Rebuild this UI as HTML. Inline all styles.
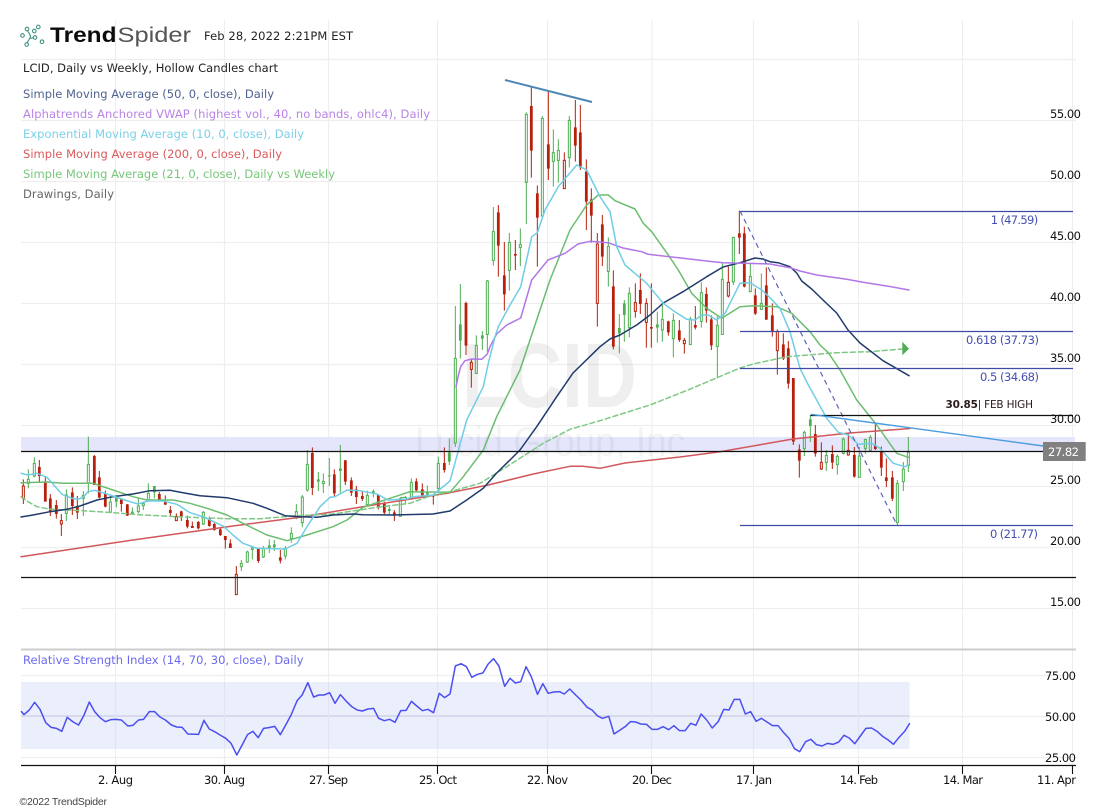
<!DOCTYPE html>
<html><head><meta charset="utf-8"><title>LCID chart</title>
<style>
html,body{margin:0;padding:0;background:#fff;width:1106px;height:811px;overflow:hidden}
svg{display:block}
svg *{vector-effect:non-scaling-stroke}
text{font-family:"DejaVu Sans","Liberation Sans",sans-serif;font-size:11.5px}
.l{fill:none;stroke-linejoin:round;stroke-linecap:round;stroke-width:1.5}
.gl{fill:none;stroke:#4fae53;stroke-width:1}
.gb{fill:none;stroke:#4fae53;stroke-width:2.8}
.rl{fill:none;stroke:#b6200c;stroke-width:1}
.rb{fill:none;stroke:#b6200c;stroke-width:2.8}
.ax{fill:#111}
</style></head><body>
<svg width="1106" height="811" viewBox="0 0 1106 811" xmlns="http://www.w3.org/2000/svg">
<rect width="1106" height="811" fill="#fff"/>
<!-- grid -->
<path d="M115.5 20V649M224.5 20V649M328.5 20V649M437.5 20V649M547.5 20V649M652 20V649M753.5 20V649M858.5 20V649M962.5 20V649M1072.5 20V649" stroke="#eeeeee" stroke-width="1.2" fill="none"/>
<path d="M21 59.5H1076M21 120.5H1076M21 181.5H1076M21 242.5H1076M21 303.5H1076M21 364.5H1076M21 425.5H1076M21 486.5H1076M21 547.5H1076M21 608.5H1076" stroke="#eeeeee" stroke-width="1.2" fill="none"/>
<path d="M115.5 650V766M224.5 650V766M328.5 650V766M437.5 650V766M547.5 650V766M651.5 650V766M753.5 650V766M858.5 650V766M962.5 650V766M1072.5 650V766M21 675.5H1076M21 716.5H1076M21 757.5H1076" stroke="#eeeeee" stroke-width="1.2" fill="none"/>
<!-- band -->
<rect x="21" y="437" width="1054" height="14.5" fill="#e5e5fb"/>
<!-- watermark -->
<text x="462" y="407" textLength="175" lengthAdjust="spacingAndGlyphs" style="font-family:'Liberation Sans',sans-serif;font-size:92px;font-weight:bold" fill="#000" opacity=".06">LCID</text>
<text x="415" y="456" textLength="270" lengthAdjust="spacingAndGlyphs" style="font-family:'Liberation Sans',sans-serif;font-size:42px" fill="#000" opacity=".04">Lucid Group, Inc</text>

<!-- candles left -->
<g transform="translate(0,420) scale(.33333)">
<path class="gl" d="M85 148V178M85 190V205M82 178h6V190h-6zM103 112V130M103 168V172M100 130h6V168h-6zM199 208V225M199 280V303M196 225h6V280h-6zM250 213V226M250 235V288M247 226h6V235h-6zM265 50V133M265 190V220M262 133h6V190h-6zM331 228V246M331 277V278M328 246h6V277h-6zM415 235V258M415 275V280M412 258h6V275h-6zM430 248V251M430 257V270M427 251h6V257h-6zM445 190V220M445 242V245M442 220h6V242h-6zM610 273V277M610 312V315M607 277h6V312h-6zM724 420V430M724 440V453M721 430h6V440h-6zM742 392V396M742 426V429M739 396h6V426h-6zM757 380V384M757 388V418M754 384h6V388h-6zM790 378V386M790 411V414M787 386h6V411h-6zM856 378V386M856 408V418M853 386h6V408h-6zM874 322V340M874 355V368M871 340h6V355h-6zM889 252V275M889 293V298M886 275h6V293h-6zM907 225V231M907 308V322M904 231h6V308h-6zM922 90V133M922 210V215M919 133h6V210h-6zM970 160V184M970 191V219M967 184h6V191h-6zM1102 212V226M1102 254V260M1099 226h6V254h-6zM1201 232V236M1201 289V290M1198 236h6V289h-6zM1216 228V232M1216 240V250M1204 232h15V240h-15zM1234 175V187M1234 232V238M1231 187h6V232h-6zM1315 110V130M1315 205V215M1312 130h6V205h-6z
M349 225V262M397 262V284M463 198V235M808 358V399M823 360V393M955 156V213M988 114V198M1021 75V218M1120 208V232M1168 255V285M1282 196V228M1348 55V135"/>
<path class="gb" d="M349 232V245M397 275V282M463 198V217M808 376V386M823 373V382M955 178V185M988 166V169M1021 145V153M1120 213V220M1168 267V273M1282 218V224M1348 97V125"/>
<path class="rl" d="M70 178V198M70 235V252M67 198h6V235h-6zM184 282V302M184 312V348M181 302h6V312h-6zM529 280V290M529 302V303M526 290h6V302h-6zM709 438V463M706 463h6V524h-6z
M118 120V185M136 172V245M151 222V288M169 240V296M217 202V285M232 228V297M283 105V195M298 153V235M316 212V262M364 235V275M382 252V288M478 216V245M496 226V255M511 258V291M544 272V303M562 287V325M577 305V324M595 303V328M628 290V320M643 308V332M661 325V348M676 348V386M691 358V384M775 385V429M841 390V430M937 82V225M1003 148V228M1036 120V195M1054 172V228M1069 198V252M1087 215V243M1135 222V268M1153 245V283M1183 270V303M1249 175V213M1267 190V228M1300 228V254M1333 82V158"/>
<path class="rb" d="M118 141V168M136 185V245M151 235V276M169 255V282M217 217V258M232 260V278M283 108V195M298 172V233M316 220V260M364 238V252M382 253V287M478 222V240M496 245V254M511 270V279M544 274V290M562 300V320M577 318V324M595 306V325M628 296V318M643 312V330M661 328V345M676 348V360M691 370V384M775 385V423M841 412V422M937 99V204M1003 163V220M1036 121V185M1054 181V218M1069 208V231M1087 228V237M1135 225V262M1153 250V278M1183 277V287M1249 184V211M1267 208V226M1300 230V231M1333 129V150"/>
</g>
<!-- candles middle -->
<g transform="translate(430,70) scale(.33333)">
<path class="gl" d="M76 708V865M76 1119V1131M73 865h6V1119h-6zM139 796V826M139 910V912M136 826h6V910h-6zM172 630V633M172 793V845M169 633h6V793h-6zM190 411V485M190 571V587M187 485h6V571h-6zM238 489V517M238 601V662M235 517h6V601h-6zM271 475V524M271 532V588M268 524h6V532h-6zM289 127V133M289 337V462M286 133h6V337h-6zM337 138V145M337 438V440M334 145h6V438h-6zM370 178V248M370 274V350M367 248h6V274h-6zM385 208V241M385 271V338M382 241h6V271h-6zM418 138V151M418 263V292M415 151h6V263h-6zM535 502V529M535 604V650M532 529h6V604h-6zM598 652V670M598 773V802M595 670h6V773h-6zM697 705V748M697 780V815M694 748h6V780h-6zM730 730V751M730 806V862M727 751h6V806h-6zM781 740V747M781 824V824M778 747h6V824h-6zM814 637V668M814 754V773M811 668h6V754h-6zM862 740V766M862 829V925M859 766h6V829h-6zM877 580V628M877 793V795M874 628h6V793h-6zM910 500V502M910 636V645M907 502h6V636h-6zM961 580V619M961 665V667M958 619h6V665h-6zM994 610V700M994 718V718M991 700h6V718h-6z
M91 642V866M157 783V840M568 732V850M583 690V815M682 725V818"/>
<path class="gb" d="M91 763V812M157 796V806M568 774V790M583 700V735M682 763V773"/>
<path class="rl" d="M124 868V877M124 898V953M121 877h6V898h-6zM403 247V271M400 271h6V356h-6zM502 489V522M502 700V770M499 522h6V700h-6zM616 640V698M616 724V743M613 698h6V724h-6zM649 685V700M649 757V833M646 700h6V757h-6zM763 804V811M763 821V851M760 811h6V821h-6zM895 590V637M895 678V682M892 637h6V678h-6zM1042 778V784M1042 842V914M1039 784h6V842h-6z
M108 695V855M205 405V620M223 516V722M256 510V600M304 52V323M322 346V590M355 65V330M436 90V275M451 105V300M469 268V480M484 355V518M517 435V588M550 601V838M631 610V732M664 640V833M715 752V797M748 750V816M796 708V778M829 652V758M844 736V840M928 422V552M943 470V652M976 655V735M1009 592V750M1027 700V800M1060 790V870M1075 813V956"/>
<path class="rb" d="M108 699V827M205 427V527M223 616V673M256 552V557M304 108V242M322 370V443M355 223V296M436 172V227M451 187V292M469 305V395M484 388V437M517 463V560M550 649V830M631 660V702M664 771V776M715 754V787M748 781V810M796 765V773M829 672V722M844 748V826M928 490V503M943 490V650M976 676V731M1009 646V749M1027 736V784M1060 823V866M1075 835V941"/>
</g>
<!-- candles right -->
<g transform="translate(780,400) scale(.33333)">
<path class="gl" d="M73 92V97M73 146V168M70 97h6V146h-6zM139 150V166M139 188V213M136 166h6V188h-6zM172 163V169M172 194V224M169 169h6V194h-6zM190 113V117M190 160V163M187 117h6V160h-6zM238 141V168M238 232V233M235 168h6V232h-6zM256 118V118M256 146V162M253 118h6V146h-6zM271 105V112M271 151V153M268 112h6V151h-6zM352 240V250M352 368V375M349 250h6V368h-6zM370 186V207M370 245V273M367 207h6V245h-6zM385 111V157M385 197V216M382 157h6V197h-6zM91 45V126"/>
<path class="gb" d="M91 58V78"/>
<path class="rl" d="M124 127V187M124 207V210M121 187h6V207h-6zM205 97V151M205 165V167M202 151h6V165h-6zM40 -66V135M58 133V233M106 75V170M157 136V207M223 141V233M286 70V150M304 140V228M319 175V261M337 213V303"/>
<path class="rb" d="M40 -66V125M58 148V182M106 102V161M157 162V188M223 165V230M286 135V147M304 155V203M319 232V243M337 232V296"/>
</g>

<!-- SMA 200 red -->
<polyline class="l" stroke="#d0575c" points="21,556.7 133,540 233,526 300,517.3 367,506 450,492.7 488.3,485 533.3,474 570,466.3 583,466.3 600,468.3 625,463 680,457 720,451.7 793,439 850,433 910,428.5"/>
<!-- SMA 21 weekly dashed -->
<polyline class="l" stroke="#7fc884" stroke-dasharray="5 3" points="21,496.7 28,501.7 37,506.7 50,509.3 83,510.7 113,512.7 143,515 177,516.7 227,518.7 260,518.7 293,516 333,514 377,507.3 410,503.3 430,496 450,491.7 480,483.3 506.7,466.7 543.3,443.3 570,429.3 600,420.7 650,405 688,390 740,368 753,364 787,356.7 837,352.7 870,351.7 902,349"/>
<polygon points="902.3,341.7 909,348.7 902.3,355.3" fill="#4fae53"/>
<!-- SMA 21 green -->
<polyline class="l" stroke="#6bbd70" points="21,482.7 47,482 63,483.3 93,483.3 113,490 133,496.7 147,500 173,500 190,503.3 207,508.3 227,515 243,523.3 267,535 287,540.7 307,535 333,526.7 347,520 363,507.3 390,498.3 410,491.7 450,492.3 463.3,476.7 483.3,450 496.7,416.7 520,370 533.3,330 550,280 570,230 586.7,205 598.3,195 608.3,195 615,200.7 635,209 643.3,223.3 651.7,231.7 668.3,255 678.3,270 691.7,293.3 706.7,308.3 721.7,318.3 740,306.7 753,305.7 776.7,306.7 791.7,313.3 810,331.7 820,345 828.3,352.7 840,370 856.7,400 876.7,425 896.7,453.3 908.3,457.3"/>
<!-- SMA 50 dark -->
<polyline class="l" stroke="#203a6b" points="21,517 33,515 50,511.7 67,509.3 80,506 97,500 113,496.7 133,494 150,490.7 170,490.3 183,492.7 200,495.7 227,497.7 253,503.3 267,508.3 285,515.7 300,516.7 317,517.3 333,515 353,514 363,514.7 393,515 433,514 450,511 466.7,500 483.3,488.3 496.7,473 510,460 520,450 536.7,426.7 556.7,396.7 573,373 600,346.7 610,339 620,335 636.7,325 650,315 663.3,303 683,291.7 706.7,276.7 723,267 740,262.7 755,258 763,259 770,261.7 778,262.7 790,266.7 796.7,273 801.7,281 811.7,289 823,300 836.7,313 848,330 860,343 883,360.7 909,375.7"/>
<!-- VWAP purple -->
<polyline class="l" stroke="#b276e6" points="456,387 458,376.7 460.7,366.7 465,360.7 471.7,359 481.7,359.3 487.3,354 490,346.7 496.7,334 506.7,325 520.7,318 531.7,280 548,260 565,253.3 578,244 590,241.3 608,242.7 623,248 641.7,251.7 648,254.3 683,258.3 713,261.7 723,262.7 770,264 790,267.7 800,271 816.7,275 846.7,279.3 863,282.3 886.7,286 909,290"/>
<!-- EMA 10 cyan -->
<polyline class="l" stroke="#70cde6" points="21,473.3 28,475 37,473.3 47,477.3 62,494.3 72,498.3 78,499.3 83,497.3 88,491.7 95,490.3 110,495 130,501.7 138,504 148,501 163,501 177,504.3 190,512.7 203,516.7 223,526 233,535 243,543.3 257,548.3 285,549 297,543.3 307,526.7 320,506.7 330,497.3 335,496.7 347,490 360,490.7 377,494 388,500 407,499 413,496.7 433,495 450,481 456.7,456.7 466.7,420 483.3,386.7 488.3,363.3 495,336.7 498.3,326.7 510,305 520.7,286.7 531.7,236.7 537.3,232.7 545,210 558.3,186.7 576.7,165 586.7,170 600,196.7 610,211.7 616.7,246.7 625,265 646.7,283.3 663.3,303.3 673.3,310.7 686.7,319.3 695,320 701.7,315 708.3,315 716.7,320 725,313.3 740,283.3 750,282.7 761.7,290 770,297.7 780,308.3 790,331.7 800,368.3 808.3,385 816.7,400 826.7,418.3 838.3,432.3 848.3,435 858.3,444.3 871.7,443.3 880,448.3 893.3,463.3 905,466.7 908.3,465"/>
<!-- Fib & annotations -->
<path d="M740 211.5H1073M740 331.5H1073M740 368.5H1073M740 525.5H1073" stroke="#3f4ba3" stroke-width="1.2" fill="none"/>
<line x1="740" y1="211" x2="897" y2="525" stroke="#5c64b5" stroke-width="1.2" stroke-dasharray="5 4"/>
<path d="M21 451.5H1043M21 577.5H1076M810.5 415.5H1073" stroke="#111" stroke-width="1.2" fill="none"/>
<line x1="505" y1="80" x2="592" y2="102" stroke="#4d86b4" stroke-width="2"/>
<line x1="810.7" y1="414.3" x2="1043.3" y2="446" stroke="#4a9be0" stroke-width="1.4"/>

<!-- RSI -->
<rect x="21" y="682" width="888.5" height="67" fill="#ebeefb"/>
<line x1="21" y1="716" x2="909.5" y2="716" stroke="#d9d9ee" stroke-width="2"/>
<path d="M115.5 682V749M224.5 682V749M328.5 682V749M437.5 682V749M547.5 682V749M651.5 682V749M753.5 682V749M858.5 682V749" stroke="#e3e4f3" stroke-width="1.2" fill="none"/>
<g transform="translate(0,640) scale(.35714,.33333)">
<polyline class="l" stroke="#4b4ff0" points="60,215 67,224 82,210 97,187 112,208 128,248 143,262 158,265 173,274 188,232 205,246 220,255 235,226 250,186 265,215 280,233 295,245 310,239 325,238 340,240 358,258 372,256 388,240 402,238 418,215 433,215 448,231 463,240 480,255 495,261 510,262 526,282 556,283 571,241 586,267 601,275 616,285 632,295 647,310 663,345 678,315 693,284 708,274 723,293 738,265 753,263 769,259 785,284 800,255 815,225 832,182 846,165 862,128 878,171 893,165 908,165 923,158 938,190 953,164 968,182 985,200 1000,210 1015,213 1030,207 1046,205 1060,235 1076,242 1091,238 1106,247 1122,212 1137,211 1152,184 1167,198 1183,212 1198,208 1214,218 1230,160 1245,173 1260,162 1275,78 1291,71 1306,80 1321,112 1337,103 1352,99 1367,72 1382,56 1397,78 1413,139 1428,115 1443,129 1458,125 1473,80 1488,111 1505,163 1520,131 1535,160 1550,156 1568,155"/>
</g>
<g transform="translate(560,640) scale(.34843,.33333)">
<polyline class="l" stroke="#4b4ff0" points="0,156 12,162 28,147 45,165 60,180 78,202 92,210 108,228 122,235 140,229 155,282 170,272 187,260 202,245 217,246 232,252 248,253 264,268 280,268 296,260 312,269 327,257 343,272 359,272 375,250 390,256 405,222 421,240 437,264 454,245 470,208 485,210 500,178 516,178 532,222 547,215 563,244 578,235 594,246 610,257 626,257 642,278 658,296 673,326 688,335 705,305 720,298 736,314 752,318 768,310 784,313 800,306 815,286 830,294 846,311 862,288 878,265 894,264 910,274 926,289 942,300 957,313 973,292 990,273 1003,251"/>
</g>
<line x1="21" y1="649.5" x2="1076" y2="649.5" stroke="#cccccc" stroke-width="2"/>
<line x1="21" y1="765.5" x2="1076" y2="765.5" stroke="#111" stroke-width="1.2"/>
<path d="M115.5 765V774M224.5 765V774M328.5 765V774M437.5 765V774M547.5 765V774M651.5 765V774M753.5 765V774M858.5 765V774M962.5 765V774M1072.5 765V774" stroke="#111" stroke-width="1.1" fill="none"/>

<!-- Y labels -->
<g class="ax">
<text x="1050" y="118" textLength="31">55.00</text>
<text x="1050" y="179" textLength="31">50.00</text>
<text x="1050" y="240" textLength="31">45.00</text>
<text x="1050" y="301" textLength="31">40.00</text>
<text x="1050" y="362" textLength="31">35.00</text>
<text x="1050" y="423" textLength="31">30.00</text>
<text x="1050" y="484" textLength="31">25.00</text>
<text x="1050" y="545" textLength="31">20.00</text>
<text x="1050" y="606" textLength="31">15.00</text>
<text x="1045" y="680" textLength="31">75.00</text>
<text x="1045" y="721" textLength="31">50.00</text>
<text x="1045" y="762" textLength="31">25.00</text>
<text x="98" y="784" textLength="35">2. Aug</text>
<text x="204" y="784" textLength="41">30. Aug</text>
<text x="309" y="784" textLength="39">27. Sep</text>
<text x="419" y="784" textLength="38">25. Oct</text>
<text x="527" y="784" textLength="41">22. Nov</text>
<text x="632" y="784" textLength="40">20. Dec</text>
<text x="736" y="784" textLength="36">17. Jan</text>
<text x="840" y="784" textLength="38">14. Feb</text>
<text x="943" y="784" textLength="40">14. Mar</text>
<text x="1037" y="784" textLength="39">11. Apr</text>
</g>
<rect x="1043" y="442" width="42.7" height="19" fill="#808080"/>
<text x="1048" y="456" textLength="31" fill="#fff">27.82</text>
<!-- Fib labels -->
<g fill="#4450b0">
<text x="990.7" y="224" textLength="47.5">1 (47.59)</text>
<text x="966" y="344" textLength="73">0.618 (37.73)</text>
<text x="980" y="381" textLength="59">0.5 (34.68)</text>
<text x="990" y="538" textLength="48">0 (21.77)</text>
</g>
<text x="945.5" y="408" textLength="87.5" fill="#2a1a1c" style="font-size:10.5px"><tspan font-weight="bold">30.85</tspan>| FEB HIGH</text>

<!-- Logo -->
<g fill="none" stroke="#3f9281" stroke-width="1.1">
<circle cx="22.5" cy="35.5" r="1.8"/><circle cx="27" cy="29" r="1.8"/><circle cx="34.3" cy="31" r="1.8"/><circle cx="38.3" cy="27" r="1.8"/><circle cx="35" cy="37.5" r="1.8"/><circle cx="42" cy="41.7" r="1.8"/><circle cx="26.7" cy="44.5" r="1.8"/>
<path d="M27.7 31C29.5 34 31 35.5 30.3 37.5C29.5 39.5 28 40.7 27.2 42.6M30.5 38.5L33.2 37.8"/>
</g>
<text x="50" y="42" textLength="66.5" lengthAdjust="spacingAndGlyphs" fill="#0c0c0c" style="font-family:'Liberation Sans',sans-serif;font-weight:bold;font-size:21.5px">Trend</text>
<text x="117.5" y="42" textLength="73.5" lengthAdjust="spacingAndGlyphs" fill="#555" style="font-family:'Liberation Sans',sans-serif;font-size:21.5px;font-weight:normal">Spider</text>
<text x="204" y="40" textLength="149" fill="#222">Feb 28, 2022 2:21PM EST</text>
<!-- Legend -->
<text x="23" y="72" textLength="255" fill="#222">LCID, Daily vs Weekly, Hollow Candles chart</text>
<text x="23" y="98" textLength="251" fill="#4f6390">Simple Moving Average (50, 0, close), Daily</text>
<text x="23" y="118" textLength="407" fill="#b983e6">Alphatrends Anchored VWAP (highest vol., 40, no bands, ohlc4), Daily</text>
<text x="23" y="138" textLength="281" fill="#7cd0e8">Exponential Moving Average (10, 0, close), Daily</text>
<text x="23" y="158" textLength="259" fill="#d9595c">Simple Moving Average (200, 0, close), Daily</text>
<text x="23" y="178" textLength="312" fill="#76c67a">Simple Moving Average (21, 0, close), Daily vs Weekly</text>
<text x="23" y="198" textLength="91" fill="#666">Drawings, Daily</text>
<text x="23" y="664" textLength="280.5" fill="#6a6af0">Relative Strength Index (14, 70, 30, close), Daily</text>
<text x="19.5" y="805" textLength="87.5" fill="#444" style="font-family:'Liberation Sans',sans-serif;font-size:10.5px">©2022 TrendSpider</text>
</svg>
</body></html>
